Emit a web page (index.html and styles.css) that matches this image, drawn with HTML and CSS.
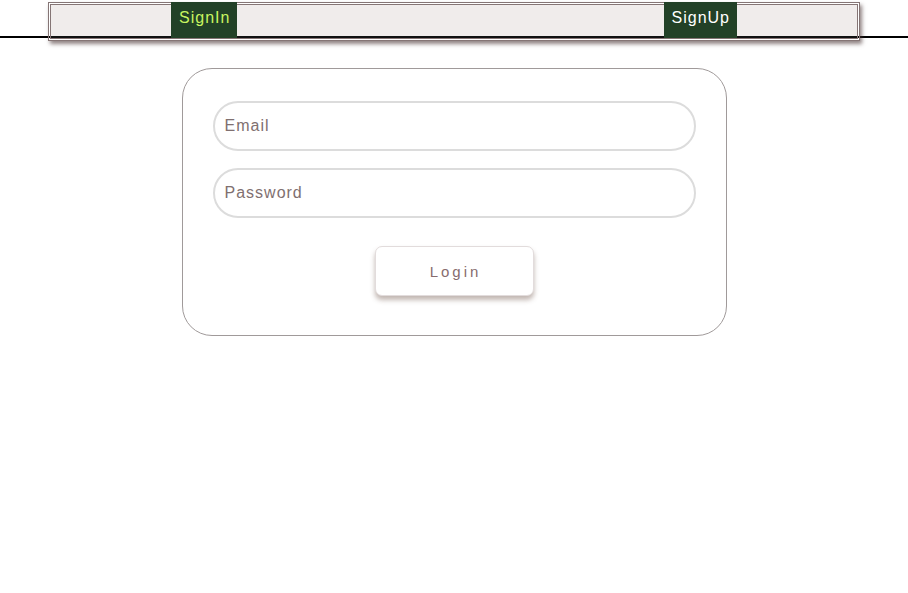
FILE: index.html
```html
<!DOCTYPE html>
<html lang="en">
<head>
<meta charset="utf-8">
<title>Login</title>
<link rel="stylesheet" href="styles.css">
</head>
<body>
<header class="topbar">
  <nav class="nav">
    <a class="nav-link nav-link--active" href="#">SignIn</a>
    <a class="nav-link" href="#">SignUp</a>
  </nav>
</header>
<main class="page">
  <form class="card">
    <input class="field" type="email" placeholder="Email">
    <input class="field" type="password" placeholder="Password">
    <button class="login-btn" type="button">Login</button>
  </form>
</main>
</body>
</html>
```
FILE: styles.css
```css
html, body {
  margin: 0;
  padding: 0;
  background: #fff;
  font-family: "Liberation Sans", Arial, sans-serif;
}

.topbar {
  box-sizing: content-box;
  height: 34px;
  padding-top: 2px;
  border-bottom: 2px solid #000;
}

.nav {
  box-sizing: border-box;
  width: 812px;
  height: 39px;
  margin: 0 auto;
  padding: 0 120px;
  border: 3px double #857575;
  background: linear-gradient(#f0eceb 0 31px, #111 31px 33px, #f0eceb 33px);
  background-clip: padding-box;
  box-shadow: 2px 3px 4px rgba(70, 50, 50, 0.6);
  display: flex;
  justify-content: space-between;
  align-items: flex-start;
}

.nav-link {
  display: block;
  margin-top: -3px;
  height: 36px;
  line-height: 32px;
  padding: 0 7px 0 8px;
  background: #224127;
  color: #fff;
  font-size: 16px;
  letter-spacing: 1px;
  text-decoration: none;
}

.nav-link--active {
  color: #c8f560;
}

.page {
  display: flex;
  justify-content: center;
  padding-top: 30px;
}

.card {
  box-sizing: border-box;
  width: 545px;
  padding: 32px 30px 39px;
  border: 1px solid #a09a9a;
  border-radius: 30px;
  display: flex;
  flex-direction: column;
  align-items: center;
}

.field {
  box-sizing: border-box;
  width: 100%;
  height: 50px;
  margin: 0 0 17px;
  padding: 0 10px;
  border: 2px solid #dcdcdc;
  border-radius: 25px;
  outline: none;
  font-family: "Liberation Sans", Arial, sans-serif;
  font-size: 16px;
  letter-spacing: 1px;
  color: #7d6e6e;
  background: #fff;
}

.field::placeholder {
  color: #807070;
}

.login-btn {
  box-sizing: border-box;
  margin-top: 11px;
  width: 159px;
  height: 50px;
  border: 1px solid #e2dcdc;
  border-radius: 7px;
  background: #fff;
  box-shadow: 0 4px 5px rgba(120, 95, 85, 0.45);
  font-family: "Liberation Sans", Arial, sans-serif;
  font-size: 15px;
  letter-spacing: 3px;
  color: #876c6e;
  padding: 0 0 0 3px;
  cursor: pointer;
}
```
